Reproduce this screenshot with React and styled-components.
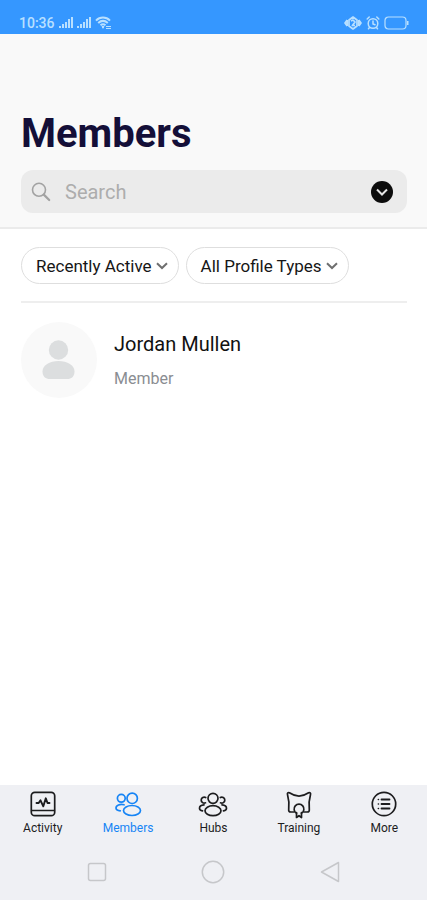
import React from "react";
import styled, { createGlobalStyle } from "styled-components";

const GlobalStyle = createGlobalStyle`
  * {
    box-sizing: border-box;
  }

  body {
    margin: 0;
    background: #ffffff;
    font-family: Roboto, "Liberation Sans", sans-serif;
  }

  button,
  input {
    font-family: inherit;
  }
`;

const Screen = styled.div`
  min-height: 100vh;
  display: flex;
  flex-direction: column;
`;

const StatusBar = styled.div`
  height: 34px;
  padding: 12px 18px 0 19px;
  display: flex;
  justify-content: space-between;
  align-items: flex-start;
  background: #3597ff;
  color: #b9e0ff;
`;

const StatusGroup = styled.div`
  display: flex;
  align-items: center;
  gap: 4px;
  height: 22px;
`;

const Time = styled.span`
  font-size: 14px;
  line-height: 22px;
  font-weight: 500;
`;

const Header = styled.header`
  padding: 76px 20px 14px 21px;
  background: #f9f9f9;
  border-bottom: 2px solid #ebebeb;
`;

const Title = styled.h1`
  margin: 0 0 12px;
  font-size: 40px;
  line-height: 48px;
  font-weight: 700;
  color: #140f38;
`;

const SearchBox = styled.label`
  height: 43px;
  padding: 0 14px 0 10px;
  display: flex;
  align-items: center;
  gap: 14px;
  border-radius: 12px;
  background: #ebebeb;
`;

const SearchInput = styled.input`
  flex: 1;
  min-width: 0;
  padding: 0;
  border: 0;
  outline: none;
  background: transparent;
  font-size: 20px;
  line-height: 24px;
  color: #111111;

  &::placeholder {
    color: #adadad;
    opacity: 1;
  }
`;

const RoundButton = styled.button`
  width: 22px;
  height: 22px;
  padding: 0;
  display: flex;
  border: 0;
  border-radius: 50%;
  background: #0c0c0c;
  cursor: pointer;
`;

const Content = styled.main`
  flex: 1;
  padding: 18px 20px 0 21px;
`;

const Filters = styled.div`
  display: flex;
  gap: 7px;
  padding-bottom: 17px;
  border-bottom: 2px solid #eeeeee;
`;

const FilterButton = styled.button`
  height: 37px;
  padding: 0 10px 0 14px;
  display: flex;
  align-items: center;
  gap: 4px;
  border: 1px solid #dedede;
  border-radius: 19px;
  background: #ffffff;
  color: #161616;
  font-size: 17px;
  line-height: 20px;
  white-space: nowrap;
  cursor: pointer;
`;

const MemberList = styled.ul`
  margin: 0;
  padding: 19px 0;
  list-style: none;
`;

const MemberRow = styled.li`
  display: flex;
  align-items: center;
  gap: 17px;
`;

const Avatar = styled.div`
  width: 76px;
  height: 76px;
  border-radius: 50%;
  background: #f9f9f9;
`;

const MemberName = styled.div`
  margin-bottom: 13px;
  font-size: 20px;
  line-height: 24px;
  color: #111111;
`;

const MemberRole = styled.div`
  font-size: 16px;
  line-height: 20px;
  color: #8a8d92;
`;

const BottomArea = styled.footer`
  background: #eff0f4;
`;

const TabBar = styled.nav`
  height: 59px;
  padding-top: 4px;
  display: grid;
  grid-template-columns: repeat(5, 1fr);
`;

const Tab = styled.a`
  display: flex;
  flex-direction: column;
  align-items: center;
  color: ${(props) => (props.$active ? "#1684f5" : "#1c1c1e")};
  font-size: 12px;
  line-height: 18px;
  text-decoration: none;
`;

const SystemNav = styled.div`
  height: 56px;
  padding: 0 39px;
  display: grid;
  grid-template-columns: repeat(3, 1fr);
`;

const SystemButton = styled.button`
  padding: 0;
  display: flex;
  align-items: center;
  justify-content: center;
  border: 0;
  background: transparent;
  color: #c6c7ca;
  cursor: pointer;
`;

const Signal = () => (
  <svg width="14" height="12" viewBox="0 0 14 12" fill="currentColor">
    <rect x="0" y="9" width="2" height="2" />
    <rect x="3" y="7" width="2" height="4" />
    <rect x="6" y="5" width="2" height="6" />
    <rect x="9" y="2" width="2" height="9" />
    <rect x="12" y="0" width="2" height="11" />
  </svg>
);

const Wifi = () => (
  <svg width="17" height="14" viewBox="0 0 17 14" fill="none" stroke="currentColor" strokeWidth="2">
    <path d="M1 4.600c4-4 10-4 14 0M3.200 7c3-2.700 6.600-2.700 9.600 0M5.500 9.300c1.600-1.300 3.400-1.300 5 0" />
    <path d="M7 10.500h2l-1 1.800z" fill="currentColor" strokeWidth="1" />
    <path d="M11 10.500h5M11 12.500h5" strokeWidth="1.200" />
  </svg>
);

const Vibrate = () => (
  <svg width="18" height="14" viewBox="0 0 18 14" fill="none" stroke="currentColor" strokeWidth="1.700" strokeLinejoin="round">
    <path d="M9 1l4 3v6l-4 3-4-3V4z" />
    <path d="M3.200 4L1 7l2.200 3M14.800 4L17 7l-2.200 3M3.200 4v6M14.800 4v6" />
    <path d="M7 5l2-1 2 2-3 4M9 9.500h2" />
  </svg>
);

const Alarm = () => (
  <svg width="14" height="14" viewBox="0 0 14 14" fill="none" stroke="currentColor" strokeWidth="1.500" strokeLinecap="round">
    <circle cx="7" cy="7.500" r="4.800" />
    <path d="M7 5v3l2 .8M1.200 3l2-2M12.800 3l-2-2M3.500 11.500l-1 1.300M10.500 11.500l1 1.300" />
  </svg>
);

const Battery = () => (
  <svg width="25" height="14" viewBox="0 0 25 14" fill="none" stroke="currentColor" strokeWidth="1.200">
    <rect x="1" y="1" width="21" height="12" rx="3.500" />
    <path d="M23.700 5v4" strokeWidth="1.600" />
  </svg>
);

const SearchIcon = () => (
  <svg width="20" height="20" viewBox="0 0 20 20" fill="none" stroke="#a2a2a2" strokeLinecap="round">
    <circle cx="8" cy="7.800" r="6.500" strokeWidth="1.600" />
    <path d="M12.800 12.600l5.400 5.400" strokeWidth="2.200" />
  </svg>
);

const Chevron = () => (
  <svg width="12" height="8" viewBox="0 0 12 8" fill="none" stroke="#6f6f6f" strokeWidth="2">
    <path d="M1 1.200l5 4.800 5-4.800" />
  </svg>
);

const Person = () => (
  <svg width="76" height="76" viewBox="0 0 76 76" fill="#dcdedf">
    <circle cx="37.500" cy="28" r="9.700" />
    <path d="M21.500 49.500c0-6 7-10.500 16-10.500s16 4.500 16 10.500c0 5-3 7.500-7.500 7.500H29c-4.500 0-7.500-2.500-7.500-7.500z" />
  </svg>
);

const iconProps = {
  width: 30,
  height: 30,
  viewBox: "0 0 30 30",
  fill: "none",
  stroke: "currentColor",
  strokeWidth: 1.7,
  strokeLinecap: "round",
  strokeLinejoin: "round",
};

const ActivityIcon = () => (
  <svg {...iconProps}>
    <rect x="3.300" y="3.300" width="23.400" height="23.400" rx="3.500" />
    <path d="M3.500 21.500h23" strokeWidth="1.300" />
    <path d="M8.500 14h2.200l1.800-2.700 2.800 6 2.500-8 1.700 4.700h2" strokeWidth="1.900" />
  </svg>
);

const MembersIcon = () => (
  <svg {...iconProps}>
    <circle cx="19.200" cy="9.300" r="5.200" />
    <circle cx="8.300" cy="9.300" r="3.900" />
    <ellipse cx="19" cy="21.500" rx="8.500" ry="5" />
    <path d="M11 15.800c-4-1-8 .5-8 3.200 0 1.600 1.700 2.600 4.300 2.800" />
  </svg>
);

const HubsIcon = () => (
  <svg {...iconProps}>
    <circle cx="15" cy="9.300" r="5" />
    <ellipse cx="15" cy="21.700" rx="8" ry="5" />
    <path d="M7.700 8.500a3 3 0 1 0-.2 5.300M22.300 8.500a3 3 0 1 1 .2 5.300" />
    <path d="M6 15.800c-2.700.2-4.500 1.500-4.500 3.400 0 1.400 1 2.300 3 2.700M24 15.800c2.700.2 4.500 1.500 4.500 3.400 0 1.400-1 2.300-3 2.700" />
  </svg>
);

const TrainingIcon = () => (
  <svg {...iconProps}>
    <path d="M10 23H6.700c-1.500 0-2.200-.9-2-2.300.6-5 .3-10-1.200-15.200-.4-1.500.6-2.300 1.900-1.700 6.200 4.200 13 4.200 19.200 0 1.300-.6 2.300.2 1.900 1.700-1.500 5.200-1.800 10.200-1.200 15.200.2 1.400-.5 2.300-2 2.300H20" />
    <path d="M12.500 24.300a4.900 4.900 0 1 1 5 0" />
    <path d="M12.500 23.500v5l2.500-1.800 2.500 1.800v-5" />
  </svg>
);

const MoreIcon = () => (
  <svg {...iconProps}>
    <circle cx="15" cy="15" r="11.700" />
    <path d="M12.500 10.500h8M12.500 15h8M12.500 19.500h8" strokeWidth="1.800" />
    <path d="M9.300 10.500h.2M9.300 15h.2M9.300 19.500h.2" strokeWidth="1.500" />
  </svg>
);

const filters = ["Recently Active", "All Profile Types"];

const members = [{ name: "Jordan Mullen", role: "Member" }];

const tabs = [
  { label: "Activity", icon: ActivityIcon },
  { label: "Members", icon: MembersIcon, active: true },
  { label: "Hubs", icon: HubsIcon },
  { label: "Training", icon: TrainingIcon },
  { label: "More", icon: MoreIcon },
];

const App = () => {
  return (
    <Screen>
      <GlobalStyle />
      <StatusBar>
        <StatusGroup>
          <Time>10:36</Time>
          <Signal />
          <Signal />
          <Wifi />
        </StatusGroup>
        <StatusGroup>
          <Vibrate />
          <Alarm />
          <Battery />
        </StatusGroup>
      </StatusBar>
      <Header>
        <Title>Members</Title>
        <SearchBox htmlFor="search">
          <SearchIcon />
          <SearchInput id="search" type="text" placeholder="Search" aria-label="Search" />
          <RoundButton type="button" aria-label="Search options">
            <svg width="22" height="22" viewBox="0 0 22 22" fill="none" stroke="#e4e4e4" strokeWidth="2">
              <path d="M6 8.500l5 5 5-5" />
            </svg>
          </RoundButton>
        </SearchBox>
      </Header>
      <Content>
        <Filters>
          {filters.map((filter) => (
            <FilterButton key={filter} type="button">
              {filter}
              <Chevron />
            </FilterButton>
          ))}
        </Filters>
        <MemberList>
          {members.map((member) => (
            <MemberRow key={member.name}>
              <Avatar>
                <Person />
              </Avatar>
              <div>
                <MemberName>{member.name}</MemberName>
                <MemberRole>{member.role}</MemberRole>
              </div>
            </MemberRow>
          ))}
        </MemberList>
      </Content>
      <BottomArea>
        <TabBar>
          {tabs.map(({ label, icon: Icon, active }) => (
            <Tab key={label} href={`#${label.toLowerCase()}`} $active={active}>
              <Icon />
              {label}
            </Tab>
          ))}
        </TabBar>
        <SystemNav>
          <SystemButton type="button" aria-label="Recent apps">
            <svg width="24" height="24" viewBox="0 0 24 24" fill="none" stroke="currentColor" strokeWidth="1.500">
              <rect x="3.500" y="3.500" width="17" height="17" rx="2" />
            </svg>
          </SystemButton>
          <SystemButton type="button" aria-label="Home">
            <svg width="24" height="24" viewBox="0 0 24 24" fill="none" stroke="currentColor" strokeWidth="1.500">
              <circle cx="12" cy="12" r="10.700" />
            </svg>
          </SystemButton>
          <SystemButton type="button" aria-label="Back">
            <svg width="24" height="24" viewBox="0 0 24 24" fill="none" stroke="currentColor" strokeWidth="1.500" strokeLinejoin="round">
              <path d="M20.500 2.500v19L3.500 12z" />
            </svg>
          </SystemButton>
        </SystemNav>
      </BottomArea>
    </Screen>
  );
};

export default App;
